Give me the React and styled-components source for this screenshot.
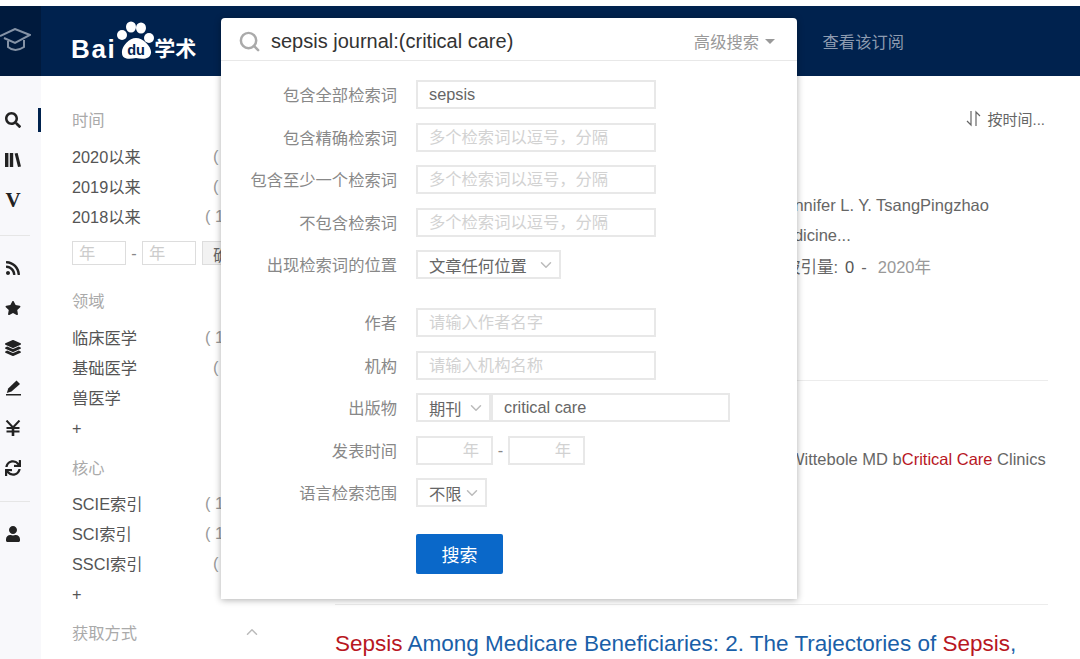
import React from 'react'
import styled, { createGlobalStyle } from 'styled-components'
import { FaSearch, FaRss, FaStar, FaLayerGroup, FaSync, FaUser } from 'react-icons/fa'
import { FiSearch, FiChevronDown, FiChevronUp } from 'react-icons/fi'

const GlobalStyle = createGlobalStyle`
  html, body {
    margin: 0;
    padding: 0;
    background: #fff;
  }
  * {
    box-sizing: border-box;
  }
`

const Page = styled.div`
  position: relative;
  width: 1080px;
  height: 659px;
  padding-top: 6px;
  overflow: hidden;
  font-family: "Liberation Sans", "Noto Sans CJK SC", sans-serif;
  font-size: 16.3px;
  color: #555;
  background: #fff;
`

const Header = styled.header`
  display: flex;
  align-items: center;
  height: 70px;
  background: #00224e;
`

const CapCell = styled.div`
  display: flex;
  align-items: center;
  width: 41px;
  height: 100%;
  background: #001a3d;
`

const LogoWrap = styled.div`
  display: flex;
  align-items: flex-end;
  height: 38px;
  margin: 0 0 2px 30px;
  color: #fff;
`

const LogoLatin = styled.span`
  font-size: 26px;
  font-weight: 700;
  line-height: 20px;
  letter-spacing: 1.6px;
`

const LogoCjk = styled.span`
  font-size: 21px;
  font-weight: 700;
  line-height: 20px;
`

const HeaderLink = styled.a`
  margin-left: auto;
  margin-right: 176px;
  color: #8d9bb0;
`

const Body = styled.div`
  display: flex;
  height: 583px;
`

const Rail = styled.nav`
  width: 41px;
  padding-top: 32px;
  background: #f8f8fb;
`

const RailGroup = styled.div`
  display: flex;
  flex-direction: column;
  gap: 16px;
`

const RailItem = styled.div`
  display: flex;
  align-items: center;
  height: 24px;
  padding-left: 5px;
  font-size: 16px;
  color: #222;
  border-right: 3px solid ${(p) => (p.$active ? '#00224e' : 'transparent')};

  svg {
    width: 16px;
    height: 16px;
  }
`

const VeeGlyph = styled.span`
  width: 16px;
  font-family: "Liberation Serif", serif;
  font-size: 21px;
  font-weight: 700;
  line-height: 1;
  text-align: center;
`

const RailDivider = styled.div`
  height: 1px;
  margin: ${(p) => p.$top}px 11px 20px 0;
  background: #e6e6e6;
`

const Filters = styled.aside`
  width: 294px;
  padding: 31px 0 0 31px;
`

const FilterHeading = styled.div`
  display: flex;
  justify-content: space-between;
  align-items: center;
  height: 24px;
  margin-top: ${(p) => p.$top || 0}px;
  margin-bottom: ${(p) => p.$gap ?? 10}px;
  padding-right: 74px;
  color: #aaa;

  svg {
    color: #bbb;
    width: 18px;
    height: 18px;
  }
`

const FilterItem = styled.div`
  display: flex;
  align-items: center;
  height: 30px;
  color: #555;
`

const PlusItem = styled(FilterItem)`
  padding-top: 3px;
`

const FilterLabel = styled.span`
  width: ${(p) => (p.$narrow ? 133 : 141)}px;
`

const FilterCount = styled.span`
  color: #999;
  white-space: pre;
`

const YearRow = styled.div`
  display: flex;
  align-items: center;
  margin-top: 10px;
`

const YearBox = styled.input`
  width: 54px;
  height: 24px;
  padding: 0 6px;
  font: inherit;
  background: #fff;
  border: 1px solid #ddd;

  &::placeholder {
    color: #ccc;
  }
`

const YearDash = styled.span`
  width: 16px;
  color: #888;
  text-align: center;
`

const YearButton = styled.button`
  width: 50px;
  height: 24px;
  margin-left: 6px;
  padding: 0 0 0 10px;
  font: inherit;
  color: #666;
  text-align: left;
  background: #f2f2f2;
  border: 1px solid #ddd;
`

const Results = styled.main`
  width: 713px;
`

const SortRow = styled.div`
  display: flex;
  justify-content: flex-end;
  align-items: center;
  gap: 6px;
  height: 20px;
  margin-top: 32px;
  padding-right: 3px;
  font-size: 15px;
  color: #666;
`

const ResultItem = styled.article`
  padding-top: ${(p) => p.$top}px;
  padding-bottom: ${(p) => p.$bottom}px;
  border-bottom: ${(p) => (p.$last ? 'none' : '1px solid #ececec')};
`

const MetaLine = styled.div`
  height: 30px;
  margin-top: ${(p) => p.$top || 0}px;
  padding-left: ${(p) => p.$indent}px;
  font-size: 16.5px;
  line-height: 30px;
  color: #666;
  white-space: nowrap;
`

const MetaValue = styled.span`
  margin: 0 7px;
  color: #555;
`

const MetaYear = styled.span`
  margin-left: 11px;
  color: #999;
`

const Red = styled.span`
  color: #b8171f;
`

const Title = styled.h3`
  margin: 0;
  font-size: 22.5px;
  font-weight: 400;
  line-height: 30px;
  color: #1a5fa8;
  white-space: nowrap;
`

const Popup = styled.form`
  position: absolute;
  top: 18px;
  left: 221px;
  width: 576px;
  height: 581px;
  background: #fff;
  border-radius: 4px 4px 0 0;
  box-shadow: 0 1px 7px rgba(0, 0, 0, 0.32);
`

const SearchBar = styled.div`
  display: flex;
  align-items: center;
  height: 43px;
  padding: 4px 22px 0 17px;
  border-bottom: 1px solid #e8e8e8;
`

const SearchIcon = styled(FiSearch)`
  width: 23px;
  height: 23px;
  color: #aaa;
  stroke-width: 2.6;
`

const SearchText = styled.span`
  margin-left: 10px;
  font-size: 20px;
  color: #333;
`

const AdvancedToggle = styled.span`
  display: flex;
  align-items: center;
  gap: 6px;
  margin-left: auto;
  color: #999;

  &::after {
    content: '';
    border-top: 5px solid #999;
    border-left: 5px solid transparent;
    border-right: 5px solid transparent;
  }
`

const FormBody = styled.div`
  display: flex;
  flex-direction: column;
  gap: 13.6px;
  padding-top: 19px;
`

const FormRow = styled.div`
  display: flex;
  align-items: center;
  height: 29px;
  margin-top: ${(p) => p.$top || 0}px;
`

const FieldLabel = styled.label`
  width: 176px;
  margin-right: 19px;
  padding-bottom: 1px;
  color: #888;
  text-align: right;
`

const TextField = styled.input`
  width: ${(p) => p.$width || 240}px;
  height: 29px;
  padding: 0 ${(p) => (p.$end ? 12 : 11)}px;
  font: inherit;
  color: #666;
  text-align: ${(p) => (p.$end ? 'right' : 'left')};
  background: #fff;
  border: 2px solid #e8e8e8;

  &::placeholder {
    color: #d2d2d2;
  }
`

const SelectBox = styled.div`
  display: flex;
  align-items: center;
  justify-content: space-between;
  width: ${(p) => p.$width}px;
  height: 29px;
  padding: 0 4px 0 11px;
  color: #666;
  border: 2px solid #e8e8e8;

  svg {
    width: 18px;
    height: 18px;
    color: #bbb;
  }
`

const DateDash = styled.span`
  width: 15px;
  color: #888;
  text-align: center;
`

const SubmitRow = styled.div`
  margin-top: 13px;
  padding-left: 195px;
`

const SubmitButton = styled.button`
  width: 87px;
  height: 40px;
  padding: 0;
  font-family: inherit;
  font-size: 18px;
  color: #fff;
  background: #0a68c9;
  border: none;
  border-radius: 2px;
`

const CapIcon = () => (
  <svg width="31" height="26" viewBox="0 0 31 26" fill="none" stroke="#8593a6" strokeWidth="2">
    <path d="M0 8 L15 1 L30 7 L15 15 L4 10" />
    <path d="M8 13 V19 Q15 25 24 19 V12" />
  </svg>
)

const PawLogo = () => (
  <svg width="38" height="38" viewBox="0 0 38 38">
    <g fill="#fff">
      <circle cx="6" cy="14" r="5" />
      <ellipse cx="15" cy="6" rx="5" ry="5.5" />
      <ellipse cx="25" cy="7" rx="5" ry="5.5" />
      <circle cx="33" cy="17" r="5" />
      <path d="M20 17 C27 17 36 26 35 32 C34 39 26 38 20 37 C14 38 6 39 6 32 C5 26 13 17 20 17 Z" />
    </g>
    <text x="20" y="34" textAnchor="middle" fontFamily="Liberation Sans" fontSize="14.5" fontWeight="700" fill="#00224e">
      du
    </text>
  </svg>
)

const BooksIcon = () => (
  <svg viewBox="0 0 16 16" fill="#222">
    <rect x="0" y="1" width="3.4" height="14" />
    <rect x="4.8" y="1" width="3.4" height="14" />
    <path d="M9.6 1.6 L12.6 1 L16 14.4 L13 15 Z" />
  </svg>
)

const PenIcon = () => (
  <svg viewBox="0 0 16 16" fill="#222">
    <path d="M11.5 0.5 L15 4 L6.5 11.5 L1.8 13 L3.2 8.6 Z" />
    <rect x="1" y="14" width="15" height="1.5" />
  </svg>
)

const YenIcon = () => (
  <svg viewBox="0 0 16 16" fill="none" stroke="#222" strokeWidth="2">
    <path d="M1.5 0.5 L8 7.5 L14.5 0.5" />
    <path d="M8 7 V16" strokeWidth="2.6" />
    <path d="M1.5 8 H14.5" />
    <path d="M1.5 11.5 H14.5" />
  </svg>
)

const SortIcon = () => (
  <svg width="15" height="17" viewBox="0 0 15 17" fill="none" stroke="#666" strokeWidth="1.2">
    <path d="M5 1 V15 L1 11" />
    <path d="M10 16 V2 L14 6" />
  </svg>
)

const placeholder = '多个检索词以逗号，分隔'

export default function App() {
  return (
    <Page>
      <GlobalStyle />
      <Header>
        <CapCell>
          <CapIcon />
        </CapCell>
        <LogoWrap>
          <LogoLatin>Bai</LogoLatin>
          <PawLogo />
          <LogoCjk>学术</LogoCjk>
        </LogoWrap>
        <HeaderLink>查看该订阅</HeaderLink>
      </Header>

      <Body>
        <Rail>
          <RailGroup>
            <RailItem $active><FaSearch /></RailItem>
            <RailItem><BooksIcon /></RailItem>
            <RailItem><VeeGlyph>V</VeeGlyph></RailItem>
          </RailGroup>
          <RailDivider $top={23} />
          <RailGroup>
            <RailItem><FaRss /></RailItem>
            <RailItem><FaStar /></RailItem>
            <RailItem><FaLayerGroup /></RailItem>
            <RailItem><PenIcon /></RailItem>
            <RailItem><YenIcon /></RailItem>
            <RailItem><FaSync /></RailItem>
          </RailGroup>
          <RailDivider $top={21} />
          <RailGroup>
            <RailItem><FaUser /></RailItem>
          </RailGroup>
        </Rail>

        <Filters>
          <FilterHeading>时间</FilterHeading>
          <FilterItem><FilterLabel>2020以来</FilterLabel><FilterCount>(</FilterCount></FilterItem>
          <FilterItem><FilterLabel>2019以来</FilterLabel><FilterCount>(</FilterCount></FilterItem>
          <FilterItem><FilterLabel $narrow>2018以来</FilterLabel><FilterCount>( 1</FilterCount></FilterItem>
          <YearRow>
            <YearBox placeholder="年" />
            <YearDash>-</YearDash>
            <YearBox placeholder="年" />
            <YearButton type="button">确定</YearButton>
          </YearRow>

          <FilterHeading $top={23}>领域</FilterHeading>
          <FilterItem><FilterLabel $narrow>临床医学</FilterLabel><FilterCount>( 1</FilterCount></FilterItem>
          <FilterItem><FilterLabel>基础医学</FilterLabel><FilterCount>(</FilterCount></FilterItem>
          <FilterItem><FilterLabel>兽医学</FilterLabel></FilterItem>
          <PlusItem>+</PlusItem>

          <FilterHeading $top={13} $gap={9}>核心</FilterHeading>
          <FilterItem><FilterLabel $narrow>SCIE索引</FilterLabel><FilterCount>( 1</FilterCount></FilterItem>
          <FilterItem><FilterLabel $narrow>SCI索引</FilterLabel><FilterCount>( 1</FilterCount></FilterItem>
          <FilterItem><FilterLabel>SSCI索引</FilterLabel><FilterCount>(</FilterCount></FilterItem>
          <PlusItem>+</PlusItem>

          <FilterHeading $top={12}>获取方式<FiChevronUp /></FilterHeading>
        </Filters>

        <Results>
          <SortRow><SortIcon />按时间...</SortRow>
          <ResultItem $top={62} $bottom={98}>
            <MetaLine $indent={442}>Jennifer L. Y. TsangPingzhao</MetaLine>
            <MetaLine $indent={436}>Medicine...</MetaLine>
            <MetaLine $top={2} $indent={449}>
              被引量:<MetaValue>0</MetaValue>-<MetaYear>2020年</MetaYear>
            </MetaLine>
          </ResultItem>
          <ResultItem $top={63} $bottom={130}>
            <MetaLine $indent={398}>
              Steven Wittebole MD b<Red>Critical Care</Red> Clinics
            </MetaLine>
          </ResultItem>
          <ResultItem $top={24} $bottom={0} $last>
            <Title>
              <Red>Sepsis</Red> Among Medicare Beneficiaries: 2. The Trajectories of <Red>Sepsis</Red>,
            </Title>
          </ResultItem>
        </Results>
      </Body>

      <Popup>
        <SearchBar>
          <SearchIcon />
          <SearchText>sepsis journal:(critical care)</SearchText>
          <AdvancedToggle>高级搜索</AdvancedToggle>
        </SearchBar>
        <FormBody>
          <FormRow>
            <FieldLabel>包含全部检索词</FieldLabel>
            <TextField defaultValue="sepsis" />
          </FormRow>
          <FormRow>
            <FieldLabel>包含精确检索词</FieldLabel>
            <TextField placeholder={placeholder} />
          </FormRow>
          <FormRow>
            <FieldLabel>包含至少一个检索词</FieldLabel>
            <TextField placeholder={placeholder} />
          </FormRow>
          <FormRow>
            <FieldLabel>不包含检索词</FieldLabel>
            <TextField placeholder={placeholder} />
          </FormRow>
          <FormRow>
            <FieldLabel>出现检索词的位置</FieldLabel>
            <SelectBox $width={145}>文章任何位置<FiChevronDown /></SelectBox>
          </FormRow>
          <FormRow $top={15}>
            <FieldLabel>作者</FieldLabel>
            <TextField placeholder="请输入作者名字" />
          </FormRow>
          <FormRow>
            <FieldLabel>机构</FieldLabel>
            <TextField placeholder="请输入机构名称" />
          </FormRow>
          <FormRow>
            <FieldLabel>出版物</FieldLabel>
            <SelectBox $width={75}>期刊<FiChevronDown /></SelectBox>
            <TextField $width={239} defaultValue="critical care" />
          </FormRow>
          <FormRow>
            <FieldLabel>发表时间</FieldLabel>
            <TextField $width={77} $end placeholder="年" />
            <DateDash>-</DateDash>
            <TextField $width={77} $end placeholder="年" />
          </FormRow>
          <FormRow>
            <FieldLabel>语言检索范围</FieldLabel>
            <SelectBox $width={71}>不限<FiChevronDown /></SelectBox>
          </FormRow>
          <SubmitRow>
            <SubmitButton type="button">搜索</SubmitButton>
          </SubmitRow>
        </FormBody>
      </Popup>
    </Page>
  )
}
